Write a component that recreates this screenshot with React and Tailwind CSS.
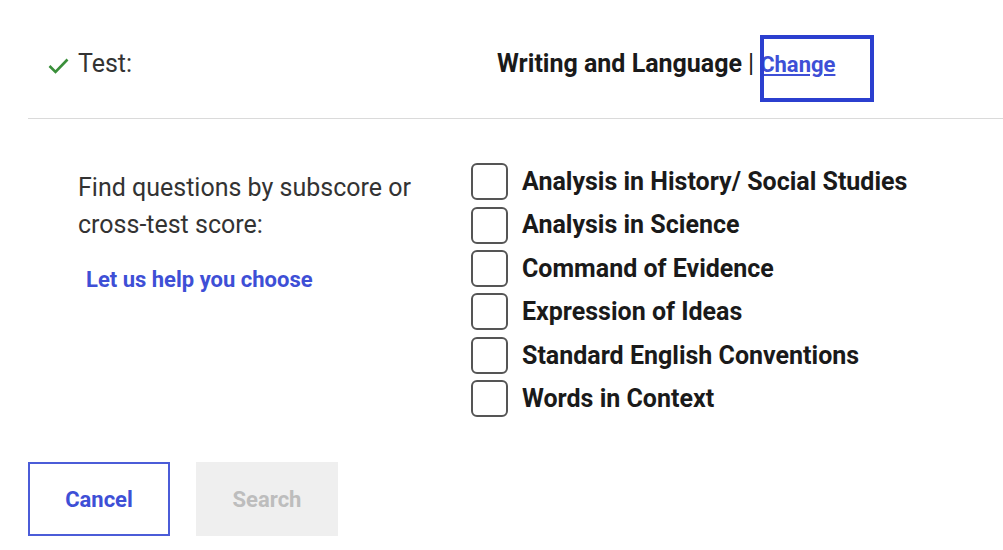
import { useState } from 'react'

const subscores = [
  'Analysis in History/ Social Studies',
  'Analysis in Science',
  'Command of Evidence',
  'Expression of Ideas',
  'Standard English Conventions',
  'Words in Context',
]

export default function App() {
  const [checked, setChecked] = useState({})

  return (
    <div className="w-[1003px] h-[550px] bg-white overflow-hidden font-['Roboto','Liberation_Sans',sans-serif] text-[#222]">
      {/* header row */}
      <div className="relative ml-[28px] h-[119px] border-b border-[#dadada] flex items-center pt-[10px]">
        <div className="w-[469px] flex items-center pl-[20px]">
          <svg width="21" height="17" viewBox="0 0 21 17" className="mr-[9px] mt-[2px]">
            <path d="M1.5 9 L7.5 15 L19.5 2.5" fill="none" stroke="#3a8f3a" strokeWidth="2.6" />
          </svg>
          <span className="text-[25px] text-[#333]">Test:</span>
        </div>
        <span className="text-[25px] font-bold text-[#1a1a1a]">Writing and Language</span>
        <span className="text-[25px] text-[#1a1a1a] ml-[6px]">|</span>
        <a href="#" className="ml-[6px] text-[22px] font-bold text-[#3e4fd6] underline underline-offset-2">
          Change
        </a>
        {/* highlight overlay */}
        <div className="absolute left-[732px] top-[35px] w-[114px] h-[67px] border-[4px] border-[#2b3fcf]" />
      </div>

      {/* body */}
      <div className="flex">
        <div className="w-[471px] pl-[78px] pt-[50px]">
          <p className="text-[25px] leading-[37px] text-[#333]">
            Find questions by subscore or
            <br />
            cross-test score:
          </p>
          <a href="#" className="block mt-[20px] ml-[8px] text-[22px] font-bold text-[#3e4fd6]">
            Let us help you choose
          </a>
        </div>
        <div className="flex flex-col pt-[41px]">
          {subscores.map((s) => (
            <label key={s} className="flex items-center h-[43.4px] cursor-pointer">
              <span
                onClick={() => setChecked({ ...checked, [s]: !checked[s] })}
                className="w-[37px] h-[37px] rounded-[6px] border-2 border-[#555] bg-white"
              />
              <span className="ml-[14px] text-[25px] font-bold text-[#1a1a1a]">{s}</span>
            </label>
          ))}
        </div>
      </div>

      {/* buttons */}
      <div className="flex gap-[26px] pl-[28px] mt-[42px]">
        <button className="w-[142px] h-[74px] border-2 border-[#4b5cd8] text-[22px] font-bold text-[#3e4fd6] bg-white">
          Cancel
        </button>
        <button disabled className="w-[142px] h-[74px] bg-[#efefef] text-[22px] font-bold text-[#bdbdbd]">
          Search
        </button>
      </div>
    </div>
  )
}
